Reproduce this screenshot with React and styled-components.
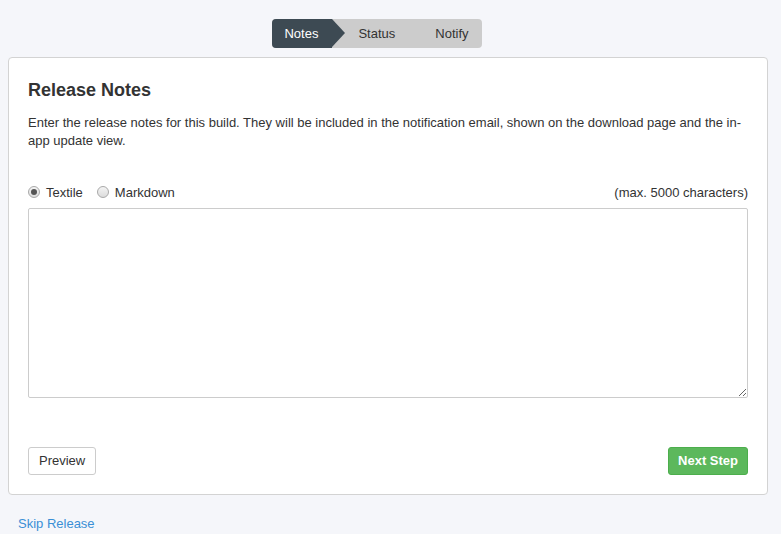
import React, { useState } from "react";
import styled, { createGlobalStyle } from "styled-components";

const Global = createGlobalStyle`
  html, body { margin: 0; padding: 0; background: #f5f6fa; }
  body { font-family: "Liberation Sans", Arial, sans-serif; font-size: 13px; color: #333; }
  * { box-sizing: border-box; }
`;

const Page = styled.div`
  padding: 19px 13px 0 8px;
  display: flex;
  flex-direction: column;
`;

const Steps = styled.div`
  align-self: center;
  display: flex;
  height: 29px;
  background: #cccccc;
  border-radius: 4px;
  margin-right: 22px;
  margin-bottom: 9px;
`;

const Step = styled.div`
  position: relative;
  height: 29px;
  line-height: 29px;
  font-size: 13px;
  color: ${(p) => (p.$active ? "#fff" : "#333")};
  background: ${(p) => (p.$active ? "#3d4a53" : "transparent")};
  padding: ${(p) => p.$pad};
  border-radius: ${(p) => (p.$active ? "4px 0 0 4px" : "0")};
  ${(p) =>
    p.$active &&
    `
    &::after {
      content: "";
      position: absolute;
      right: -13px;
      top: 0;
      border-top: 14.5px solid transparent;
      border-bottom: 14.5px solid transparent;
      border-left: 13px solid #3d4a53;
    }
  `}
`;

const Card = styled.div`
  background: #fff;
  border: 1px solid #d3d3d3;
  border-radius: 4px;
  padding: 20px 19px 19px 19px;
  display: flex;
  flex-direction: column;
`;

const Title = styled.h2`
  margin: 0 0 12px;
  font-size: 18px;
  line-height: 24px;
  font-weight: bold;
  color: #333;
`;

const Desc = styled.p`
  margin: 0 0 33px;
  line-height: 18px;
`;

const OptionsRow = styled.div`
  display: flex;
  align-items: center;
  height: 18px;
  margin-bottom: 7px;
`;

const RadioLabel = styled.label`
  display: flex;
  align-items: center;
  gap: 6px;
  margin-right: 14px;
  cursor: pointer;
`;

const RadioDot = styled.span`
  width: 12px;
  height: 12px;
  border-radius: 50%;
  border: 1px solid #a9a9a9;
  background: linear-gradient(#f4f4f4, #dcdcdc);
  display: flex;
  align-items: center;
  justify-content: center;
  &::before {
    content: "";
    width: 6px;
    height: 6px;
    border-radius: 50%;
    background: ${(p) => (p.$checked ? "#555" : "transparent")};
  }
`;

const Max = styled.span`
  margin-left: auto;
`;

const Area = styled.textarea`
  display: block;
  width: 100%;
  height: 190px;
  border: 1px solid #cccccc;
  border-radius: 2px;
  font-family: inherit;
  font-size: 13px;
  padding: 6px;
  resize: vertical;
  margin: 0 0 49px;
  outline: none;
`;

const Actions = styled.div`
  display: flex;
  justify-content: space-between;
`;

const Button = styled.button`
  height: 28px;
  padding: ${(p) => (p.$primary ? "0 9px" : "0 10px")};
  font-family: inherit;
  font-size: 13px;
  line-height: 26px;
  border-radius: 3px;
  cursor: pointer;
  color: ${(p) => (p.$primary ? "#fff" : "#333")};
  background: ${(p) => (p.$primary ? "#5cb85c" : "#fff")};
  border: 1px solid ${(p) => (p.$primary ? "#4cae4c" : "#cccccc")};
  font-weight: ${(p) => (p.$primary ? "bold" : "normal")};
`;

const Skip = styled.a`
  display: inline-block;
  margin: 20px 0 0 10px;
  line-height: 18px;
  color: #3a8fd6;
  text-decoration: none;
  align-self: flex-start;
`;

export default function App() {
  const [fmt, setFmt] = useState("textile");
  return (
    <>
      <Global />
      <Page>
        <Steps>
          <Step $active $pad="0 14px 0 12px">Notes</Step>
          <Step $pad="0 20px 0 26px">Status</Step>
          <Step $pad="0 13px 0 20px">Notify</Step>
        </Steps>
        <Card>
          <Title>Release Notes</Title>
          <Desc>
            Enter the release notes for this build. They will be included in the notification email, shown on the download page and the in-app update view.
          </Desc>
          <OptionsRow>
            <RadioLabel onClick={() => setFmt("textile")}>
              <RadioDot $checked={fmt === "textile"} />
              Textile
            </RadioLabel>
            <RadioLabel onClick={() => setFmt("markdown")}>
              <RadioDot $checked={fmt === "markdown"} />
              Markdown
            </RadioLabel>
            <Max>(max. 5000 characters)</Max>
          </OptionsRow>
          <Area />
          <Actions>
            <Button>Preview</Button>
            <Button $primary>Next Step</Button>
          </Actions>
        </Card>
        <Skip href="#">Skip Release</Skip>
      </Page>
    </>
  );
}
